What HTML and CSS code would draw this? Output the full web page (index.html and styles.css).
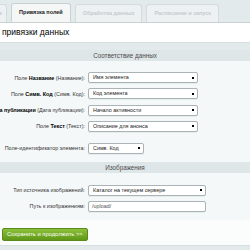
FILE: index.html
```html
<!DOCTYPE html>
<html lang="ru">
<head>
  <meta charset="UTF-8">
  <title>Импорт</title>
  <link rel="stylesheet" href="styles.css">
</head>
<body>

<div class="tabs">
  <span class="tab tab-cut">е</span>
  <span class="tab active">Привязка полей</span>
  <span class="tab">Обработка данных</span>
  <span class="tab">Расписание и запуск</span>
</div>

<div class="title">привязки данных</div>

<div class="panel">
  <div class="section">Соответствие данных</div>

  <div class="rows rows-first">
    <div class="row">
      <label><span>Поле <b>Название</b> (Название):</span></label>
      <div class="select w-main">Имя элемента</div>
    </div>
    <div class="row">
      <label><span>Поле <b>Симв. Код</b> (Симв. Код):</span></label>
      <div class="select w-main">Код элемента</div>
    </div>
    <div class="row">
      <label><span>Поле <b>Дата публикации</b> (Дата публикации):</span></label>
      <div class="select w-main">Начало активности</div>
    </div>
    <div class="row">
      <label><span>Поле <b>Текст</b> (Текст):</span></label>
      <div class="select w-main">Описание для анонса</div>
    </div>
    <div class="row row-gap">
      <label><span>Поле-идентификатор элемента:</span></label>
      <div class="select w-short">Симв. Код</div>
    </div>
  </div>

  <div class="section">Изображения</div>

  <div class="rows rows-last">
    <div class="row">
      <label><span>Тип источника изображений:</span></label>
      <div class="select w-wide">Каталог на текущем сервере</div>
    </div>
    <div class="row">
      <label><span>Путь к изображениям:</span></label>
      <div class="input w-wide">/upload/</div>
    </div>
  </div>
</div>

<div class="footer">
  <span class="button">Сохранить и продолжить &gt;&gt;</span>
</div>

</body>
</html>
```

FILE: styles.css
```css
body {
  margin: 0;
  background: #e3eaec;
  font-family: "Liberation Sans", Arial, sans-serif;
  font-size: 6px;
  color: #000;
  overflow: hidden;
}
/* Tabs */
.tabs {
  display: flex;
  gap: 4px;
  padding-top: 3px;
  height: 19px;
  align-items: flex-end;
}
.tab {
  height: 17px;
  line-height: 17px;
  padding: 0 7px;
  background: #edf1f2;
  border: 1px solid #d3dbdd;
  border-bottom: none;
  border-radius: 3px 3px 0 0;
  color: #c4cccf;
  font-size: 5.5px;
  font-weight: bold;
}
.tab-cut {
  margin-left: -8px;
  padding: 0 4px 0 6px;
}
.tab.active {
  height: 18px;
  background: #f5f7f7;
  color: #1a1a1a;
  border-color: #c9d1d3;
}
.title {
  background: #fff;
  border-top: 1px solid #c9d1d3;
  border-bottom: 1px solid #d6dee0;
  height: 19px;
  line-height: 19px;
  padding-left: 2px;
  font-size: 8.5px;
  color: #000;
}
/* Form */
.panel {
  margin-top: 7px;
  background: #f5f8f9;
}
.section {
  background: #dfe6e8;
  height: 11px;
  line-height: 11px;
  text-align: center;
  color: #4b4b4b;
  font-size: 6.3px;
}
.rows {
  display: flex;
  flex-direction: column;
  gap: 5.3px;
}
.rows-first {
  padding: 11px 0 8px;
}
.rows-last {
  padding: 12px 0 8px;
  gap: 5px;
}
.row {
  display: flex;
  align-items: center;
  height: 11px;
}
.row-gap {
  margin-top: 5.7px;
}
.row label {
  width: 85px;
  flex: none;
  display: flex;
  justify-content: flex-end;
  overflow: hidden;
  white-space: nowrap;
  padding-right: 3px;
  font-size: 5.4px;
  color: #333;
}
.row label span {
  flex: none;
}
.row label b {
  color: #000;
}
.select, .input {
  height: 9px;
  line-height: 9px;
  border: 1px solid #aab3b6;
  border-radius: 2px;
  background: #fff;
  padding-left: 4px;
  font-size: 5.4px;
  color: #222;
  position: relative;
  box-shadow: 0 1px 0 #e6ebec;
}
.select::after {
  content: "";
  position: absolute;
  right: 3px;
  top: 3.5px;
  width: 2px;
  height: 2px;
  background: #000;
}
.w-main { width: 104px; }
.w-short { width: 50px; }
.w-wide { width: 112px; }
.input { color: #555; padding-left: 3px; width: 113px; }
/* Footer */
.footer {
  background: #fbfcfc;
  padding: 8px 2px 4px;
  border-bottom: 1px solid #d6dee0;
}
.button {
  display: inline-block;
  height: 11px;
  line-height: 11px;
  padding: 0 4px;
  border-radius: 2px;
  background: linear-gradient(#8cc13a, #5f9716);
  border: 1px solid #5a8a1c;
  color: #fff;
  font-size: 5.8px;
}
```
